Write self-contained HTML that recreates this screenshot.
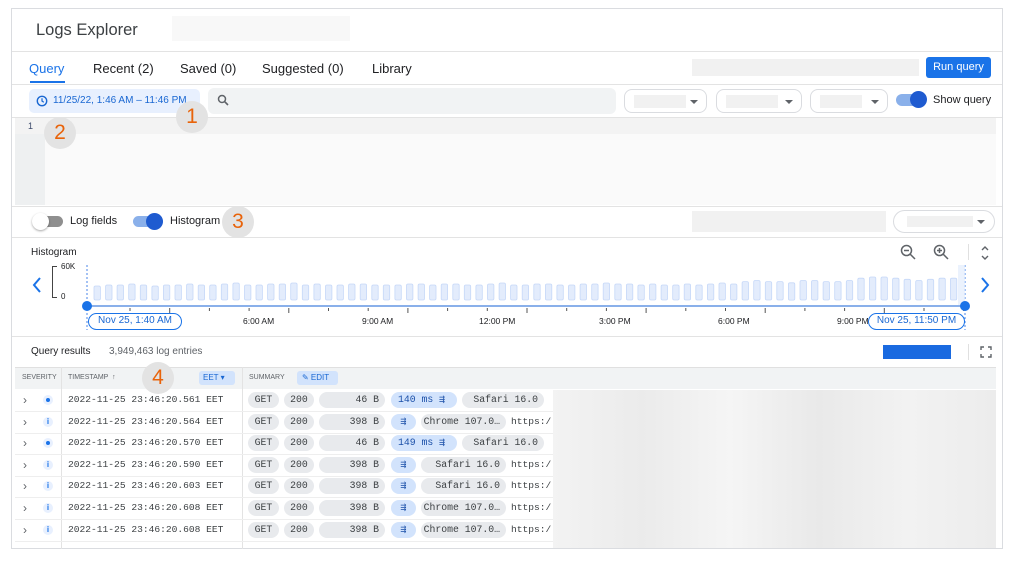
<!DOCTYPE html>
<html><head><meta charset="utf-8"><style>
*{box-sizing:border-box;margin:0;padding:0}
body{width:1019px;height:566px;background:#fff;font-family:"Liberation Sans",sans-serif;color:#202124;position:relative;overflow:hidden}
.a{position:absolute}
.frame{left:11px;top:8px;width:992px;height:541px;border:1px solid #dadce0}
.hl{position:absolute;height:1px;background:#e3e3e3}
.t{font-size:13px;position:absolute;white-space:nowrap}
.ph{position:absolute;background:#f1f1f1}
.dd{position:absolute;border:1px solid #dadce0;border-radius:8px;height:24px;top:89px;background:#fff}
.dd i{position:absolute;left:9px;top:5px;height:13px;background:#f1f1f1}
.dd b{position:absolute;right:8px;top:10px;border:4px solid transparent;border-top:4px solid #5f6368}
.num{position:absolute;width:32px;height:32px;border-radius:50%;background:#e3e3e3;color:#e8630a;font-size:21px;text-align:center;line-height:32px}
.mono{font-family:"Liberation Mono",monospace;font-size:9.6px}
.chip{position:absolute;height:16px;border-radius:8px;background:#e8eaed;font-family:"Liberation Mono",monospace;font-size:9.8px;line-height:16px;color:#3c4043;white-space:nowrap}
.bl{background:#d2e3fc}
</style></head><body>
<div class="a frame"></div>
<div class="t" style="left:36px;top:21px;font-size:16.5px;color:#3c4043">Logs Explorer</div>
<div class="ph" style="left:172px;top:16px;width:178px;height:25px;background:#f8f8f8"></div>
<div class="hl" style="left:12px;top:51px;width:990px"></div>
<div class="t" style="left:29px;top:61px;color:#1a73e8">Query</div>
<div class="a" style="left:30px;top:81px;width:35px;height:2px;background:#1a73e8"></div>
<div class="t" style="left:93px;top:61px">Recent (2)</div>
<div class="t" style="left:180px;top:61px">Saved (0)</div>
<div class="t" style="left:262px;top:61px">Suggested (0)</div>
<div class="t" style="left:372px;top:61px">Library</div>
<div class="ph" style="left:692px;top:59px;width:227px;height:17px"></div>
<div class="a" style="left:926px;top:57px;width:65px;height:21px;background:#1a73e8;border-radius:3px;color:#fff;font-size:11px;text-align:center;line-height:21px">Run query</div>
<div class="hl" style="left:12px;top:84px;width:990px"></div>
<div class="a" style="left:29px;top:89px;width:171px;height:24px;background:#e8f0fe;border-radius:5px;color:#1967d2;font-size:10px;line-height:24px;padding-left:24px">11/25/22, 1:46 AM – 11:46 PM</div>
<svg class="a" style="left:36px;top:95px" width="12" height="12" viewBox="0 0 12 12"><circle cx="6" cy="6" r="4.7" fill="none" stroke="#1967d2" stroke-width="1.4"/><path d="M6 3.3V6l1.8 1.2" fill="none" stroke="#1967d2" stroke-width="1.2"/></svg>
<div class="a" style="left:208px;top:88px;width:408px;height:26px;background:#f1f3f4;border-radius:6px"></div>
<svg class="a" style="left:217px;top:94px" width="12" height="12" viewBox="0 0 12 12"><circle cx="5" cy="5" r="3.5" fill="none" stroke="#5f6368" stroke-width="1.5"/><path d="M7.6 7.6L11 11" stroke="#5f6368" stroke-width="1.6"/></svg>
<div class="dd" style="left:624px;width:83px"><i style="width:52px"></i><b></b></div>
<div class="dd" style="left:716px;width:86px"><i style="width:52px"></i><b></b></div>
<div class="dd" style="left:810px;width:78px"><i style="width:42px"></i><b></b></div>
<div class="a" style="left:896px;top:94px;width:30px;height:12px;border-radius:6px;background:#8ab0ea"></div>
<div class="a" style="left:910px;top:91px;width:17px;height:17px;border-radius:50%;background:#1f5bd0"></div>
<div class="t" style="left:933px;top:94px;font-size:11px">Show query</div>
<div class="hl" style="left:12px;top:117px;width:990px"></div>
<div class="a" style="left:15px;top:118px;width:981px;height:87px;background:#fafafa"></div>
<div class="a" style="left:15px;top:118px;width:981px;height:16px;background:#f3f3f3"></div>
<div class="a" style="left:15px;top:134px;width:30px;height:71px;background:#eef0f1"></div>
<div class="t" style="left:28px;top:121px;font-size:9px;color:#3c4a6b">1</div>
<div class="hl" style="left:12px;top:206px;width:990px"></div>
<div class="a" style="left:33px;top:216px;width:30px;height:11px;border-radius:6px;background:#8f8f8f"></div>
<div class="a" style="left:32px;top:213px;width:17px;height:17px;border-radius:50%;background:#fff;box-shadow:0 1px 2px rgba(0,0,0,.35)"></div>
<div class="t" style="left:70px;top:215px;font-size:11px">Log fields</div>
<div class="a" style="left:133px;top:216px;width:30px;height:11px;border-radius:6px;background:#8ab0ea"></div>
<div class="a" style="left:146px;top:213px;width:17px;height:17px;border-radius:50%;background:#1f5bd0"></div>
<div class="t" style="left:170px;top:215px;font-size:11px">Histogram</div>
<div class="ph" style="left:692px;top:211px;width:194px;height:21px"></div>
<div class="a" style="left:893px;top:210px;width:102px;height:23px;border:1px solid #dadce0;border-radius:12px"><i style="position:absolute;left:13px;top:5px;width:66px;height:11px;background:#f1f1f1"></i><b style="position:absolute;right:9px;top:9px;border:4px solid transparent;border-top:4px solid #5f6368"></b></div>
<div class="hl" style="left:12px;top:237px;width:990px"></div>
<div class="t" style="left:31px;top:247px;font-size:10px">Histogram</div>
<div class="t" style="left:61px;top:262px;font-size:8px">60K</div>
<div class="t" style="left:61px;top:292px;font-size:8px">0</div>
<div class="a" style="left:52px;top:266px;width:5px;height:32px;border:1px solid #444;border-right:none"></div>
<svg class="a" style="left:32px;top:277px" width="10" height="16" viewBox="0 0 10 16"><path d="M8 1L2 8l6 7" fill="none" stroke="#1a73e8" stroke-width="2"/></svg>
<svg class="a" style="left:980px;top:277px" width="10" height="16" viewBox="0 0 10 16"><path d="M2 1l6 7-6 7" fill="none" stroke="#1a73e8" stroke-width="2"/></svg>
<svg class="a" style="left:900px;top:244px" width="16" height="16" viewBox="0 0 16 16"><circle cx="6.5" cy="6.5" r="5" fill="none" stroke="#5f6368" stroke-width="1.5"/><path d="M10 10l5 5M4 6.5h5" stroke="#5f6368" stroke-width="1.5"/></svg>
<svg class="a" style="left:933px;top:244px" width="16" height="16" viewBox="0 0 16 16"><circle cx="6.5" cy="6.5" r="5" fill="none" stroke="#5f6368" stroke-width="1.5"/><path d="M10 10l5 5M4 6.5h5M6.5 4v5" stroke="#5f6368" stroke-width="1.5"/></svg>
<div class="a" style="left:968px;top:244px;width:1px;height:16px;background:#e0e0e0"></div>
<svg class="a" style="left:980px;top:245px" width="10" height="16" viewBox="0 0 10 16"><path d="M2 5l3-3 3 3M2 11l3 3 3-3" fill="none" stroke="#5f6368" stroke-width="1.4"/></svg>
<svg id="hist" class="a" style="left:0;top:260px" width="1019" height="75"></svg>
<div class="a" style="left:88px;top:313px;width:94px;height:17px;border:1.5px solid #1a73e8;border-radius:9px;color:#1967d2;font-size:10px;text-align:center;line-height:14px">Nov 25, 1:40 AM</div>
<div class="a" style="left:868px;top:313px;width:97px;height:17px;border:1.5px solid #1a73e8;border-radius:9px;color:#1967d2;font-size:10px;text-align:center;line-height:14px;background:#fff">Nov 25, 11:50 PM</div>
<div class="t" style="left:243px;top:316px;font-size:8.5px">6:00 AM</div>
<div class="t" style="left:362px;top:316px;font-size:8.5px">9:00 AM</div>
<div class="t" style="left:479px;top:316px;font-size:8.5px">12:00 PM</div>
<div class="t" style="left:599px;top:316px;font-size:8.5px">3:00 PM</div>
<div class="t" style="left:718px;top:316px;font-size:8.5px">6:00 PM</div>
<div class="t" style="left:837px;top:316px;font-size:8.5px">9:00 PM</div>
<div class="hl" style="left:12px;top:336px;width:990px"></div>
<div class="t" style="left:31px;top:346px;font-size:10px">Query results</div>
<div class="t" style="left:109px;top:346px;font-size:10px;color:#5f6368">3,949,463 log entries</div>
<div class="a" style="left:883px;top:345px;width:68px;height:14px;background:#1a6ae0"></div>
<div class="a" style="left:968px;top:344px;width:1px;height:16px;background:#e0e0e0"></div>
<svg class="a" style="left:980px;top:346px" width="12" height="12" viewBox="0 0 12 12"><path d="M1 4V1h3M8 1h3v3M11 8v3H8M4 11H1V8" fill="none" stroke="#5f6368" stroke-width="1.4"/></svg>
<div class="a" style="left:15px;top:367px;width:981px;height:22px;background:#f1f3f4;border-top:1px solid #e0e0e0"></div>
<div class="a" style="left:61px;top:367px;width:1px;height:182px;background:#e3e3e3"></div>
<div class="a" style="left:242px;top:367px;width:1px;height:182px;background:#e3e3e3"></div>
<div class="t" style="left:22px;top:374px;font-size:7px;color:#5f6368">SEVERITY</div>
<div class="t" style="left:68px;top:374px;font-size:7px;color:#5f6368">TIMESTAMP &nbsp;↑</div>
<div class="a" style="left:199px;top:371px;width:36px;height:14px;background:#d2e3fc;border-radius:3px;color:#1967d2;font-size:8px;line-height:14px;padding-left:4px">EET ▾</div>
<div class="t" style="left:249px;top:374px;font-size:7px;color:#5f6368">SUMMARY</div>
<div class="a" style="left:297px;top:371px;width:41px;height:14px;background:#d2e3fc;border-radius:3px;color:#1967d2;font-size:8px;line-height:14px;padding-left:5px">✎ EDIT</div>
<div id="rows"></div>
<div class="a" style="left:553px;top:390px;width:443px;height:158px;background:linear-gradient(90deg,#f3f3f3,#ebebeb 20%,#f5f5f5 40%,#e9e9e9 60%,#f2f2f2 80%,#ececec)"></div>
<div class="num" style="left:176px;top:101px">1</div>
<div class="num" style="left:44px;top:117px">2</div>
<div class="num" style="left:222px;top:206px">3</div>
<div class="num" style="left:142px;top:362px">4</div>
<script>
var s='',h=document.getElementById('hist');
var hs=[14,15,15,16,15,14,15,15,16,15,15,16,17,15,15,16,16,17,15,16,15,15,16,16,15,15,15,16,16,15,16,16,15,15,16,17,15,15,16,16,15,15,16,16,17,16,16,15,16,15,15,16,15,16,17,16,16,17,16,16,15,17,17,16,16,17,19,20,20,19,18,17,18,19,19,19,19,20,19,17,18,18,19,18,18,17,18,19,20,20,16];
var n=75,x0=94,dx=(962-x0)/n;
for(var i=0;i<n;i++){var hh=hs[i%hs.length]*(i>55?1.15:1);var x=x0+i*dx;
s+='<rect x="'+x.toFixed(1)+'" y="'+(40-hh).toFixed(1)+'" width="'+(dx*0.55).toFixed(1)+'" height="'+hh.toFixed(1)+'" rx="1.5" fill="#e3ecfc" stroke="#c6d8f8" stroke-width="0.8"/>';}
s+='<line x1="87" y1="5" x2="87" y2="70" stroke="#4a86e8" stroke-dasharray="2,2"/>';
s+='<line x1="965" y1="5" x2="965" y2="70" stroke="#4a86e8" stroke-dasharray="2,2"/>';
s+='<rect x="958" y="5" width="7" height="40" fill="#e3ecfc" opacity=".7"/>';
s+='<line x1="87" y1="46" x2="965" y2="46" stroke="#8ab0ea" stroke-width="2"/>';
for(var k=0;k<22;k++){var tx=130+k*39.7;s+='<line x1="'+tx+'" y1="48" x2="'+tx+'" y2="'+(k%3==1?53:51)+'" stroke="#555" stroke-width="1"/>';}
s+='<circle cx="87" cy="46" r="5" fill="#1a73e8"/><circle cx="965" cy="46" r="5" fill="#1a73e8"/>';
h.innerHTML=s;
var R=[['561','46 B','140 ms','Safari 16.0',1,1],['564','398 B','','Chrome 107.0…',0,0],['570','46 B','149 ms','Safari 16.0',1,1],['590','398 B','','Safari 16.0',0,0],['603','398 B','','Safari 16.0',0,0],['608','398 B','','Chrome 107.0…',0,0],['608','398 B','','Chrome 107.0…',0,0]];
var o='';
for(var j=0;j<R.length;j++){var r=R[j],y=390+j*21.6;
o+='<div class="hl" style="left:15px;top:'+(y+21).toFixed(1)+'px;width:981px;background:#eee"></div>';
o+='<div class="t" style="left:23px;top:'+(y+3)+'px;font-size:12px;color:#5f6368">›</div>';
o+=r[5]?'<div class="a" style="left:43px;top:'+(y+5)+'px;width:10px;height:10px;border-radius:50%;background:#e8f0fe"><i style="position:absolute;left:3px;top:3px;width:4px;height:4px;border-radius:50%;background:#1a73e8"></i></div>':'<div class="a" style="left:43px;top:'+(y+5)+'px;width:10px;height:10px;border-radius:50%;background:#e8f0fe;color:#1a73e8;font-size:8px;text-align:center;line-height:10px;font-weight:bold">i</div>';
o+='<div class="a mono" style="left:68px;top:'+(y+4)+'px;color:#3c4043">2022-11-25 23:46:20.'+r[0]+' EET</div>';
o+='<div class="chip" style="left:248px;top:'+(y+2)+'px;width:31px;text-align:center">GET</div>';
o+='<div class="chip" style="left:284px;top:'+(y+2)+'px;width:30px;text-align:center">200</div>';
o+='<div class="chip" style="left:319px;top:'+(y+2)+'px;width:66px;text-align:right;padding-right:6px">'+r[1]+'</div>';
if(r[4]){o+='<div class="chip bl" style="left:391px;top:'+(y+2)+'px;width:66px;padding-left:7px;color:#1a4fa8">'+r[2]+' ⇶</div>';
o+='<div class="chip" style="left:462px;top:'+(y+2)+'px;width:82px;text-align:right;padding-right:6px">'+r[3]+'</div>';}
else{o+='<div class="chip bl" style="left:391px;top:'+(y+2)+'px;width:25px;text-align:center;color:#1a4fa8">⇶</div>';
o+='<div class="chip" style="left:421px;top:'+(y+2)+'px;width:85px;text-align:right;padding-right:6px">'+r[3]+'</div>';
o+='<div class="a mono" style="left:511px;top:'+(y+4)+'px;color:#3c4043">https:/</div>';}
}
document.getElementById('rows').innerHTML=o;
</script>
</body></html>
